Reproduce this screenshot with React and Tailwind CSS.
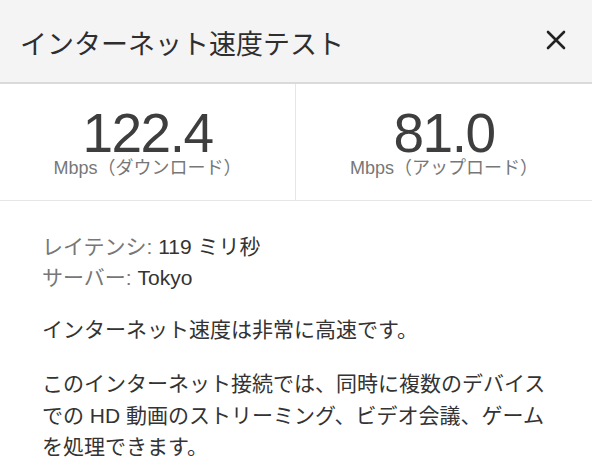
export default function App() {
  const stats = [
    { value: '122.4', label: 'Mbps（ダウンロード）' },
    { value: '81.0', label: 'Mbps（アップロード）' },
  ]

  return (
    <div className="w-[592px] h-[472px] overflow-hidden bg-white font-['Liberation_Sans','Noto_Sans_CJK_JP',sans-serif]">
      {/* Header */}
      <div className="h-[84px] bg-[#f4f4f4] border-b-2 border-[#dadada] flex items-center justify-between pl-5 pr-[26px]">
        <h1 className="text-[27px] leading-[34px] text-[#2e2e2e] pt-[7px]">インターネット速度テスト</h1>
        <button className="w-5 h-5 flex items-center justify-center -mt-[3px]">
          <svg width="20" height="20" viewBox="0 0 20 20">
            <path d="M2 2 L18 18 M18 2 L2 18" stroke="#222" strokeWidth="2.6" strokeLinecap="round" />
          </svg>
        </button>
      </div>

      {/* Speeds */}
      <div className="grid grid-cols-2 h-[117px] border-b border-[#e6e6e6]">
        {stats.map((s, i) => (
          <div
            key={i}
            className={`flex flex-col items-center pt-[27px] ${i === 0 ? 'border-r border-[#e6e6e6]' : ''}`}
          >
            <p className="text-[55px] leading-[44px] tracking-[-1.5px] text-[#3e3e3e]">{s.value}</p>
            <p className="mt-[3px] text-[18px] leading-[20px] text-[#777]">{s.label}</p>
          </div>
        ))}
      </div>

      {/* Details */}
      <div className="px-[42px] pt-[30px] text-[21px] leading-[31px] text-[#333]">
        <p>
          <span className="text-[#777]">レイテンシ: </span>119 ミリ秒
        </p>
        <p>
          <span className="text-[#777]">サーバー: </span>Tokyo
        </p>
        <p className="mt-[21px]">インターネット速度は非常に高速です。</p>
        <p className="mt-[23px] w-[530px] leading-[31.5px]">
          このインターネット接続では、同時に複数のデバイス
          <br />
          での HD 動画のストリーミング、ビデオ会議、ゲーム
          <br />
          を処理できます。
        </p>
      </div>
    </div>
  )
}
